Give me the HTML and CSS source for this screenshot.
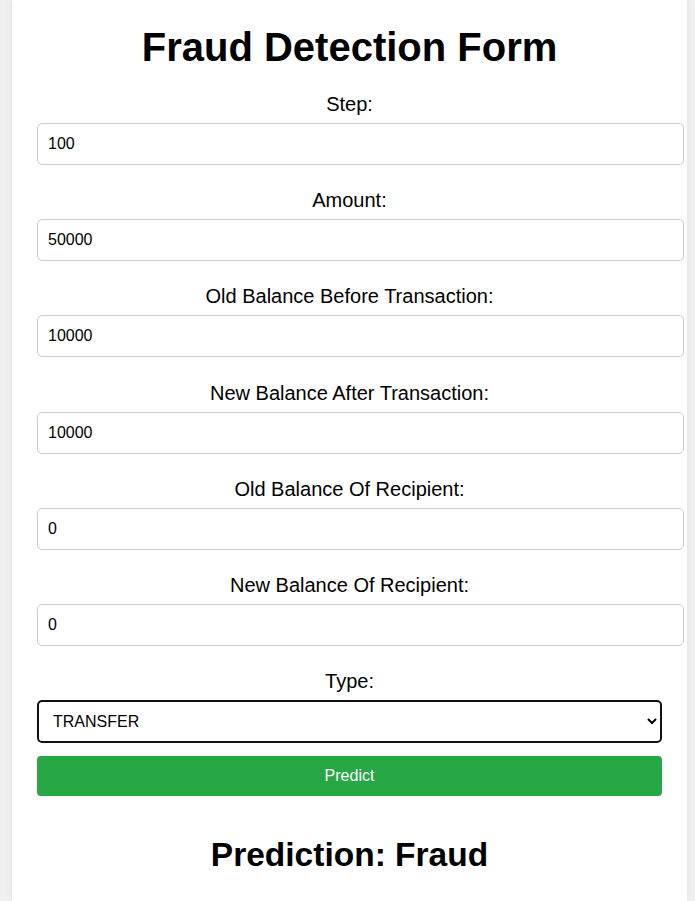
FILE: index.html
```html
<!DOCTYPE html>
<html lang="en">
<head>
<meta charset="utf-8">
<title>Fraud Detection Form</title>
<link rel="stylesheet" href="styles.css">
</head>
<body>
<div class="container">
  <h1 class="title">Fraud Detection Form</h1>
  <form class="form">
    <label class="label" for="step">Step:</label>
    <input class="field" id="step" type="text" value="100">
    <label class="label" for="amount">Amount:</label>
    <input class="field" id="amount" type="text" value="50000">
    <label class="label" for="oldorg">Old Balance Before Transaction:</label>
    <input class="field" id="oldorg" type="text" value="10000">
    <label class="label" for="neworg">New Balance After Transaction:</label>
    <input class="field" id="neworg" type="text" value="10000">
    <label class="label" for="olddest">Old Balance Of Recipient:</label>
    <input class="field" id="olddest" type="text" value="0">
    <label class="label" for="newdest">New Balance Of Recipient:</label>
    <input class="field" id="newdest" type="text" value="0">
    <label class="label" for="type">Type:</label>
    <select class="select" id="type">
      <option>TRANSFER</option>
      <option>CASH_OUT</option>
      <option>PAYMENT</option>
      <option>DEBIT</option>
      <option>CASH_IN</option>
    </select>
    <button class="button" type="button">Predict</button>
  </form>
  <h2 class="result">Prediction: Fraud</h2>
</div>
</body>
</html>
```
FILE: styles.css
```css
html, body {
  margin: 0;
  padding: 0;
}
body {
  background: #f0f0f0;
  font-family: "Liberation Sans", Arial, sans-serif;
  color: #000;
  padding: 0 8px 0 12px;
  min-height: 901px;
  box-sizing: border-box;
}
.container {
  background: #fff;
  padding: 24px 25px 20px 25px;
  min-height: 901px;
  box-sizing: border-box;
  box-shadow: 0 0 8px rgba(0, 0, 0, 0.06);
}
.title {
  margin: 0 0 23px 0;
  font-size: 40px;
  line-height: 46px;
  font-weight: bold;
  text-align: center;
}
.form {
  margin: 0;
}
.label {
  display: block;
  text-align: center;
  font-size: 20px;
  line-height: 23px;
  margin-bottom: 7px;
}
.field {
  display: block;
  width: 100%;
  box-sizing: content-box;
  padding: 10px;
  border: 1px solid #ccc;
  border-radius: 5px;
  font-family: "Liberation Sans", Arial, sans-serif;
  font-size: 16px;
  line-height: 20px;
  height: 20px;
  margin: 0 0 24.2px 0;
  color: #000;
  background: #fff;
}
.select {
  display: block;
  width: 100%;
  box-sizing: border-box;
  height: 43px;
  padding: 0 10px;
  border: 2px solid #111;
  border-radius: 5px;
  font-family: "Liberation Sans", Arial, sans-serif;
  font-size: 16px;
  color: #000;
  background-color: #fff;
  margin: 0;
}
.button {
  display: block;
  width: 100%;
  margin-top: 13px;
  height: 40px;
  border: none;
  border-radius: 4px;
  background: #28a745;
  color: #fff;
  font-family: "Liberation Sans", Arial, sans-serif;
  font-size: 16px;
  line-height: 20px;
  padding: 10px;
  cursor: pointer;
}
.result {
  margin: 40px 0 0 0;
  font-size: 33.5px;
  line-height: 38px;
  font-weight: bold;
  text-align: center;
}
```
